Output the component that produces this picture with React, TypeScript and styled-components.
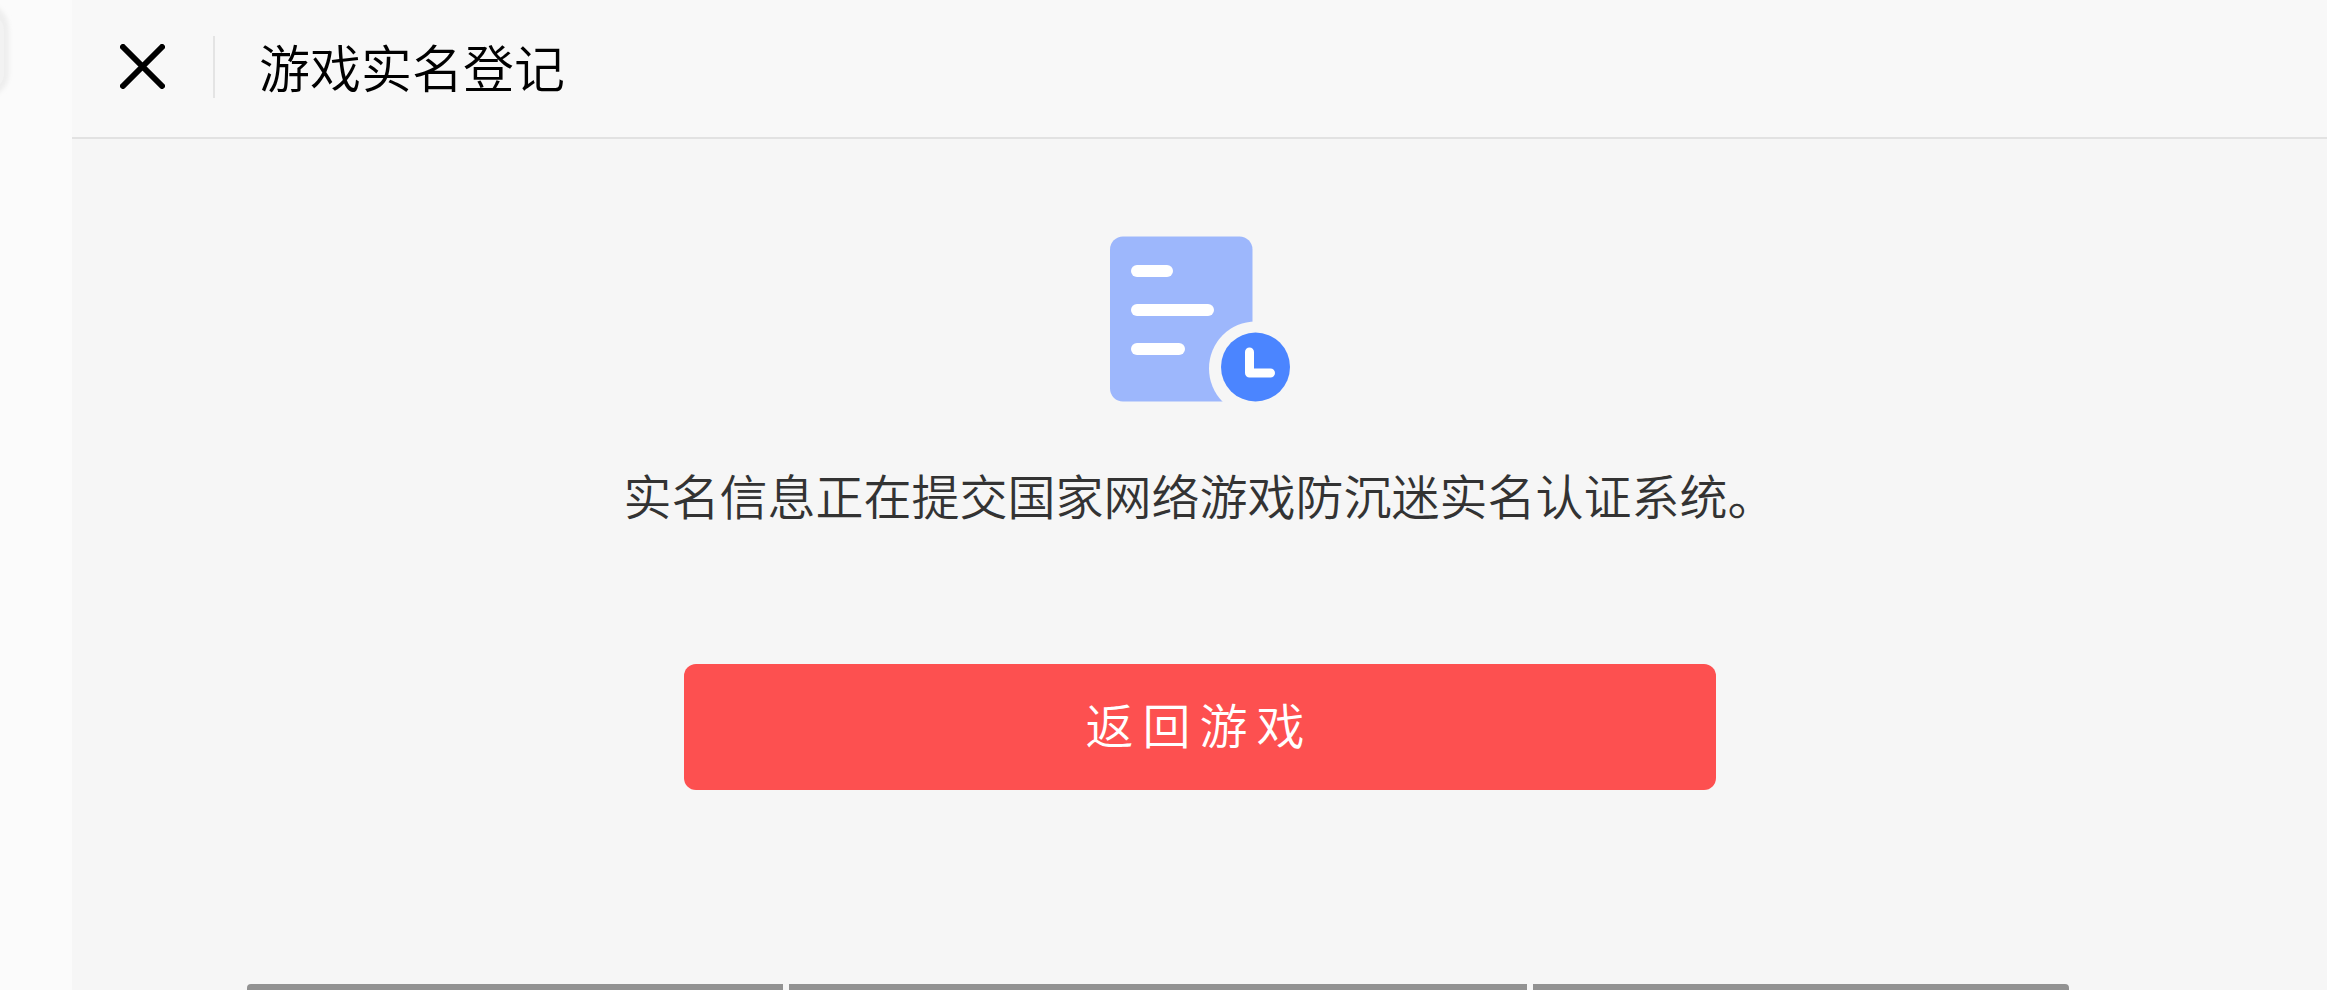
import React from "react";
import styled, { createGlobalStyle } from "styled-components";

const GlobalStyle = createGlobalStyle`
  * { box-sizing: border-box; }
  body {
    margin: 0;
    background: #f6f6f6;
    font-family: "Noto Sans CJK SC", "Noto Sans", sans-serif;
    font-weight: 350;
  }
`;

const Page = styled.div`
  display: grid;
  grid-template-columns: 72px 1fr;
  min-height: 100vh;
`;

const Rail = styled.aside`
  position: relative;
  overflow: hidden;
  background: #fbfbfb;
`;

const RailHandle = styled.svg`
  position: absolute;
  top: 0;
  left: 0;
`;

const Panel = styled.div`
  display: flex;
  flex-direction: column;
  background: #f6f6f6;
`;

const Header = styled.header`
  display: flex;
  align-items: center;
  height: 139px;
  padding: 0 48px 4px;
  border-bottom: 2px solid #e2e2e2;
  background: #f8f8f8;
`;

const CloseButton = styled.button`
  display: flex;
  padding: 0;
  border: 0;
  background: none;
  cursor: pointer;
`;

const Divider = styled.span`
  width: 2px;
  height: 62px;
  margin: 0 44px 0 48px;
  background: #e4e4e4;
`;

const Title = styled.h1`
  margin: 0;
  padding-bottom: 2px;
  color: #000;
  font-size: 51px;
  font-weight: inherit;
  line-height: 72px;
`;

const Content = styled.main`
  display: flex;
  flex-direction: column;
  align-items: center;
  padding: 97px 48px 48px;
`;

const Message = styled.p`
  margin: 56px 0 134px;
  color: #333;
  font-size: 48px;
  line-height: 72px;
  text-align: center;
`;

const ReturnButton = styled.button`
  width: 100%;
  max-width: 1032px;
  height: 126px;
  padding: 0 0 8px;
  border: 0;
  border-radius: 12px;
  background: #fd5050;
  color: #fff;
  font: inherit;
  font-size: 48px;
  letter-spacing: 9px;
  cursor: pointer;
`;

const BottomBar = styled.div`
  display: flex;
  gap: 6px;
  height: 6px;
  margin: auto 258px 0 175px;
  border-radius: 4px 4px 0 0;
  overflow: hidden;
`;

const Segment = styled.div<{ $share: number }>`
  flex: ${(p) => p.$share} 1 0;
  background: #929292;
`;

const CloseIcon = () => (
  <svg width="45" height="45" viewBox="0 0 45 45" aria-hidden="true">
    <path d="M3 3 42 42M42 3 3 42" stroke="#000" strokeWidth="6" strokeLinecap="round" fill="none" />
  </svg>
);

const PendingIcon = () => (
  <svg width="180" height="166" viewBox="0 0 180 166" aria-hidden="true">
    <rect y="0.500" width="142.500" height="165" rx="13" fill="#9db7fc" />
    <g fill="#fff">
      <rect x="21" y="29" width="42" height="12" rx="6" />
      <rect x="21" y="68" width="83" height="12" rx="6" />
      <rect x="21" y="107" width="54" height="12" rx="6" />
    </g>
    <ellipse cx="145.500" cy="132.500" rx="46.500" ry="47" fill="#f6f6f6" />
    <circle cx="145.500" cy="131" r="34.500" fill="#4b85ff" />
    <path
      d="M139.500 116V137H160.500"
      stroke="#fff"
      strokeWidth="9"
      strokeLinecap="round"
      strokeLinejoin="round"
      fill="none"
    />
  </svg>
);

export default function App() {
  return (
    <>
      <GlobalStyle />
      <Page>
        <Rail>
          <RailHandle width="16" height="110" viewBox="0 0 16 110" aria-hidden="true">
            <defs>
              <filter id="edge" x="-100%" y="-20%" width="300%" height="140%">
                <feGaussianBlur stdDeviation="2" />
              </filter>
            </defs>
            <path d="M-12 -4 0 9Q9 17 9 30V74Q9 84 0 92L-12 102Z" fill="#eee" filter="url(#edge)" />
            <path d="M-12 10 0 20Q4 24 4 32V72Q4 80 0 84L-12 94Z" fill="#f2f2f2" />
          </RailHandle>
        </Rail>
        <Panel>
          <Header>
            <CloseButton type="button" aria-label="关闭">
              <CloseIcon />
            </CloseButton>
            <Divider />
            <Title>游戏实名登记</Title>
          </Header>
          <Content>
            <PendingIcon />
            <Message>实名信息正在提交国家网络游戏防沉迷实名认证系统。</Message>
            <ReturnButton type="button">返回游戏</ReturnButton>
          </Content>
          <BottomBar>
            <Segment $share={536} />
            <Segment $share={738} />
            <Segment $share={536} />
          </BottomBar>
        </Panel>
      </Page>
    </>
  );
}
